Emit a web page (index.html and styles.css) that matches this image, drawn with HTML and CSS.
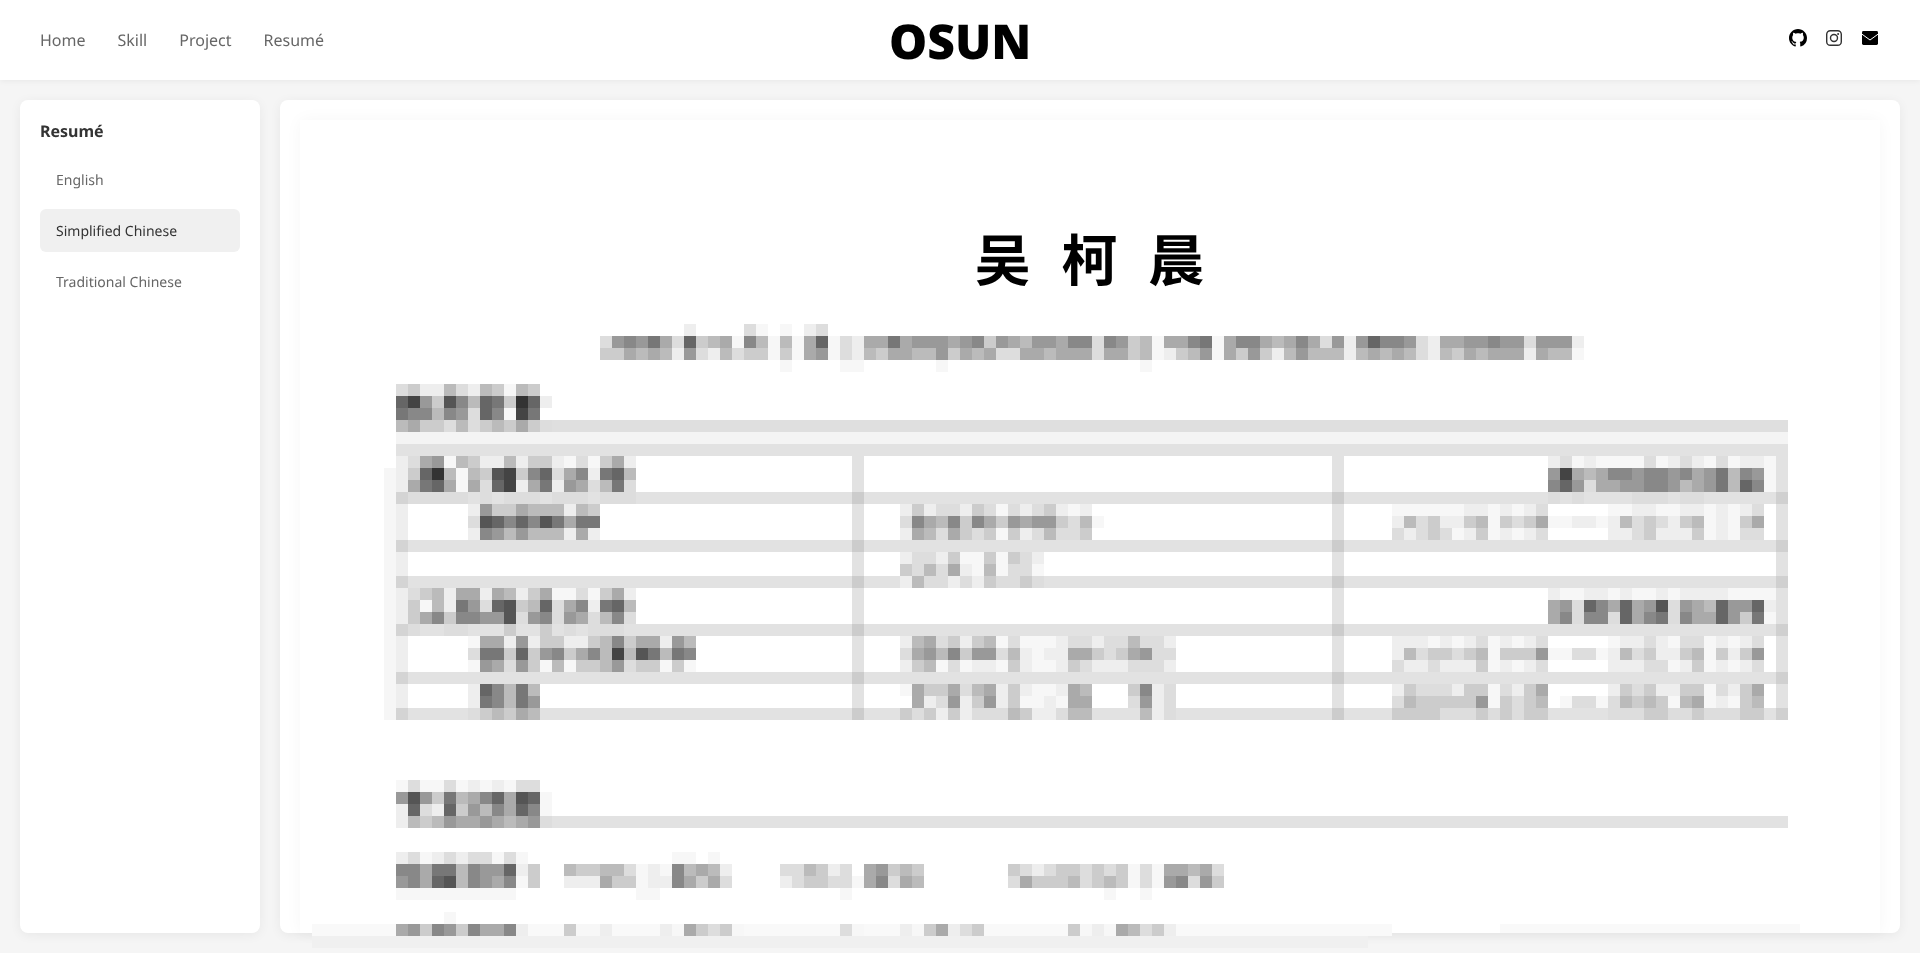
FILE: index.html
```html
<!DOCTYPE html>
<html lang="en">
<head>
<meta charset="utf-8">
<title>OSUN</title>
<link rel="stylesheet" href="styles.css">
</head>
<body>
<header class="topbar">
  <nav class="topnav">
    <a>Home</a><a>Skill</a><a>Project</a><a>Resumé</a>
  </nav>
  <div class="logo">OSUN</div>
  <div class="social">
    <svg class="ico-github" viewBox="0 0 16 16"><path d="M8 0C3.58 0 0 3.58 0 8c0 3.54 2.29 6.53 5.47 7.59.4.07.55-.17.55-.38 0-.19-.01-.82-.01-1.49-2.01.37-2.53-.49-2.69-.94-.09-.23-.48-.94-.82-1.13-.28-.15-.68-.52-.01-.53.63-.01 1.08.58 1.23.82.72 1.21 1.87.87 2.33.66.07-.52.28-.87.51-1.07-1.78-.2-3.64-.89-3.64-3.95 0-.87.31-1.59.82-2.15-.08-.2-.36-1.02.08-2.12 0 0 .67-.21 2.2.82.64-.18 1.32-.27 2-.27.68 0 1.36.09 2 .27 1.53-1.04 2.2-.82 2.2-.82.44 1.1.16 1.92.08 2.12.51.56.82 1.27.82 2.15 0 3.07-1.87 3.75-3.65 3.95.29.25.54.73.54 1.48 0 1.07-.01 1.93-.01 2.2 0 .21.15.46.55.38A8.013 8.013 0 0016 8c0-4.42-3.58-8-8-8z"/></svg>
    <svg class="ico-insta" viewBox="0 0 16 16"><rect x=".7" y=".7" width="14.6" height="14.6" rx="3.6"/><circle cx="8" cy="8" r="3.5"/><circle class="dot" cx="12.1" cy="3.9" r="1"/></svg>
    <svg class="ico-mail" viewBox="0 0 16 14"><rect width="16" height="14" rx="1.4"/><path d="M0 3.2 8 9l8-5.8"/></svg>
  </div>
</header>
<div class="layout">
  <aside class="sidebar">
    <h2 class="side-title">Resumé</h2>
    <ul class="side-list">
      <li class="side-item">English</li>
      <li class="side-item active">Simplified Chinese</li>
      <li class="side-item">Traditional Chinese</li>
    </ul>
  </aside>
  <main class="content">
    <article class="paper">
      <h1 class="name">吴 柯 晨</h1>
      <svg id="mosaic" class="mosaic" width="1416" height="624" viewBox="0 0 1416 624" shape-rendering="crispEdges" role="img" aria-label="Pixelated resume"></svg>
    </article>
  </main>
</div>
<script src="mosaic.js"></script>
</body>
</html>
```
FILE: styles.css
```css
* { box-sizing: border-box; }
html, body { margin: 0; height: 953px; overflow: hidden; }
body {
  background: #f5f5f5; font-family: "Noto Sans", sans-serif; color: #333;
  text-rendering: geometricPrecision; font-variant-ligatures: none;
}

.topbar {
  height: 80px; background: #fff; padding: 0 42px 0 40px;
  display: grid; grid-template-columns: 1fr auto 1fr; align-items: center;
  box-shadow: 0 1px 6px rgba(0,0,0,.06); position: relative;
}
.topnav { display: flex; gap: 32px; font-size: 16px; color: #666; will-change: transform; }
.logo {
  font-family: "Open Sans", sans-serif; font-weight: 800; font-size: 48px;
  height: 80px; line-height: 84px; padding-left: 2px; color: #000; will-change: transform;
}
.social { display: flex; justify-content: flex-end; align-items: center; gap: 20px; margin-top: -4px; }
.ico-github { width: 18px; height: 18px; fill: #000; margin-right: -1px; }
.ico-insta { width: 16px; height: 16px; fill: none; stroke: #333; stroke-width: 1.4; }
.ico-insta .dot { fill: #333; stroke: none; }
.ico-mail { width: 16px; height: 14px; }
.ico-mail rect { fill: #000; }
.ico-mail path { fill: none; stroke: #fff; stroke-width: 1; }

.layout { height: 873px; padding: 20px; display: flex; gap: 20px; }
.sidebar, .content {
  background: #fff; border-radius: 8px; box-shadow: 0 2px 12px rgba(0,0,0,.06);
}
.sidebar { width: 240px; flex: none; padding: 20px; }
.side-title { margin: 0 0 16px; font-size: 16px; line-height: 22px; font-weight: 700; color: #333; will-change: transform; }
.side-list { list-style: none; margin: 0; padding: 0; display: flex; flex-direction: column; gap: 8px; will-change: transform; }
.side-item { height: 43px; padding-left: 16px; font-size: 14px; line-height: 45px; color: #666; border-radius: 6px; }
.side-item.active { background: #f0f0f0; color: #333; }

.content { flex: 1; padding: 20px 20px 0; min-width: 0; }
.paper { height: 100%; background: #fff; box-shadow: 0 0 16px rgba(0,0,0,.04); padding-top: 98px; }
.name {
  margin: 0 0 26px; height: 80px; line-height: 80px; text-align: center;
  font-family: "Noto Sans CJK SC", sans-serif; font-size: 56px; font-weight: 700;
  letter-spacing: 9px; padding-left: 8px; color: #000; will-change: transform;
}
.mosaic { display: block; margin-left: 84px; overflow: visible; }
```
FILE: mosaic.js
```js
// Pixelated resume: 12px mosaic, cell = one hex grey digit ('.' = leave what is below).
var NS = "http://www.w3.org/2000/svg";
var svg = document.getElementById("mosaic");
function cell(c, r, fill, w, h) {
  var el = document.createElementNS(NS, "rect");
  el.setAttribute("x", (c - 32) * 12);
  el.setAttribute("y", (r - 27) * 12);
  el.setAttribute("width", w || 12);
  el.setAttribute("height", h || 12);
  el.setAttribute("fill", fill);
  svg.appendChild(el);
}
var L = "#e2e2e2";
function hline(r, fill) { cell(33, r, fill, 116 * 12); }
hline(35, "#dfdfdf"); hline(36, "#f4f4f4");
[37, 41, 45, 48, 52, 56, 59, 68].forEach(function (r) { hline(r, L); });
for (var r = 38; r <= 59; r++) {
  var isLine = [41, 45, 48, 52, 56, 59].indexOf(r) >= 0;
  if (r >= 39) cell(32, r, "#f6f6f6");
  cell(33, r, isLine ? "#d4d4d4" : "#eeeeee");
  cell(71, r, isLine ? "#cccccc" : L);
  cell(111, r, isLine ? "#cccccc" : L);
  cell(148, r, isLine ? "#d0d0d0" : L);
}
cell(26, 77, "#f9f9f9", 90 * 12);
cell(125, 77, "#f9f9f9", 25 * 12, 9);
cell(26, 78, "#f0f0f0", 88 * 12);

var data = [
[27,57,"e....df.f.ed"],
[28,50,"d9897ad6cbaf8bfbfa6fdeaa7a999a98"],[28,82,"c9ab99a88d89cbfaa87fa88aba8ad9"],[28,112,"e96889deaa99899d999e"],
[29,50,"ccababe9debdccfcfa9fdebcaabb9cab"],[29,82,"addaabaaadaacbfecb9fac9ceb9bbb"],[29,112,"ebababdebcabaaaeabbf"],
[30,65,"f....ff......f................f"],
[32,33,"dceebdebcfbc"],[33,33,"649c58b67c36e"],[34,33,"788b89d68f47"],[35,33,"baccdbdcbcacd"],
[38,34,"da9fbceebeccefdfcae"],[39,34,"c63bfbc54c86da8e76b"],[40,34,"a76afad64ea7e9adb7d"],[41,34,"ddddd.d.ddd.ddd.ddd"],
[42,39,"e9ccabbbebc"],[43,39,"d5686857a77"],[44,39,"e89b9bbbeae"],
[42,75,"eceddec"],[42,82,"dfdedcefe"],[43,75,"d8ab8c8"],[43,82,"ac9a99cdbf"],[44,75,"eabdacd"],[44,82,"cfcedbddc"],
[46,75,"eddecff"],[46,82,"cfcde"],[47,75,"cdbdaef"],[47,82,"bfddf"],[48,75,"ebddede"],[48,82,"cddcd"],
[49,34,"dcbeaaeabecaffdfcae"],[50,34,"cfbe79d65cb6da8e76b"],[51,34,"ca8c88995d98d9adb8d"],[52,34,"d..dd...c..c.d.ddd"],
[53,39,"faae9ecceecb8caae9b"],[54,39,"d77c6c98ca8b4b57b78"],[55,39,"f9ad9cfbfccb9dccfcf"],
[57,39,"e68b7b"],[58,39,"e78b79"],[59,39,"dcbcab"],
[53,75,"ebadcec"],[53,82,"bfdfffeddeddbdde"],[54,75,"da9b8c9"],[54,82,"9dbefeeaacdca9dd"],[55,75,"ecbfdfe"],[55,82,"efceffecdeeeddde"],
[57,75,"faccadb"],[57,82,"aeceffeab...c8ed"],[58,75,".aed9ec"],[58,82,"9ecffefaa...d9ed"],[59,75,"cdceced"],[59,82,"ddbceedbb....bed"],
[38,129,"edfeffffdfedefdfeef"],[39,129,"94aba8898898a97b89f"],[40,129,"869daa99889ba97b68f"],[41,129,"d.d....ddd.dd"],
[42,116,"ffffffeefefed"],[42,134,"ffeeffeefefed"],[43,116,"ebdceecbfcdcaffeef"],[43,134,"ebdcdecbfefca"],[44,116,"dedcdfecfefed"],[44,134,"eedceeecfefdd"],
[49,129,"effeefeffefeeeeffff"],[50,129,"a9d68a6a95d9ab6996e"],[51,129,"a8d88d6a87d8aa69c7f"],
[53,116,"eeefefedfefed"],[53,134,"feedefddfefed"],[54,116,"ebdccdcbfccc9ffddf"],[54,134,"ebdceecbfcec9"],[55,116,"deedeeecfefed"],[55,134,"eeeddfecfefed"],
[57,116,"ecdddeccfdeca"],[57,134,"ecdceeccfdeca"],[58,116,"dbccccc9fcdcb.fddf"],[58,134,"dbcbcfbafefcb"],[59,116,"ccccdddcdcdcc"],[59,134,"dddccddcdddcc"],
[65,33,"fdffdfefefdd"],[66,33,"959c7ba86a56f"],[67,33,"e6de6c9b8a68f"],[68,33,"ebcb9aa9aba9d"],
[71,33,"edfededdfdf"],[71,56,"ff.f"],
[72,33,"88a77b8996ec"],[72,47,"bccbbdfef8babe"],[72,65,"ddbced"],[72,72,"a9cbc"],[72,84,"cdedccdcdcfdf"],[72,97,"aabad"],
[73,33,"98a65b89a8fc"],[73,47,"eeeaccfee8acad"],[73,65,"edccdd"],[73,71,"fa8dab"],[73,84,"dacccbdcbcfdf"],[73,97,"98d9c"],
[74,33,"ffffffffff"],[74,53,"ff"],[74,70,"f"],[74,92,"f"],[74,95,"f"],[76,37,"f"],
[77,33,"a9c89c8aa8e"],[77,47,"cffe"],[77,55,"efacdcf"],[77,70,"df"],[77,75,"efcaedc"],[77,89,"cfefabdce"]
];
data.forEach(function (d) {
  for (var i = 0; i < d[2].length; i++) {
    var ch = d[2][i];
    if (ch === ".") continue;
    var v = ch === "f" ? 247 : parseInt(ch, 16) * 17;
    cell(d[1] + i, d[0], "rgb(" + v + "," + v + "," + v + ")");
  }
});
```
